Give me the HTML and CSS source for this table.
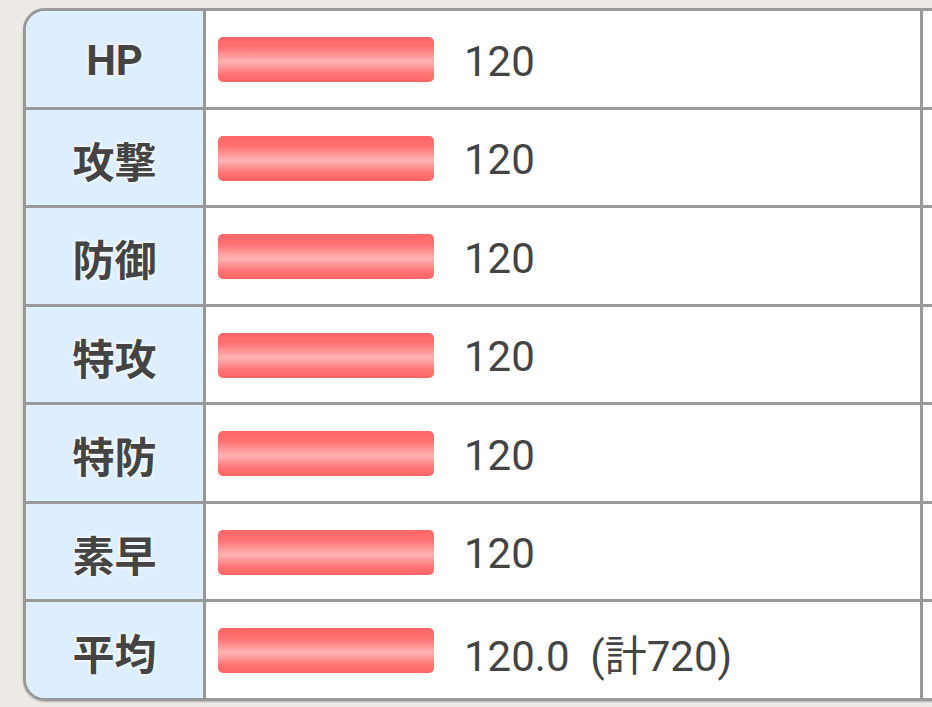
FILE: index.html
```html
<!DOCTYPE html>
<html lang="ja">
<head>
<meta charset="utf-8">
<link rel="stylesheet" href="styles.css">
</head>
<body>
<div class="stats">
  <div class="row"><div class="head">HP</div><div class="val"><span class="bar"></span><span class="num">120</span></div><div class="extra"></div></div>
  <div class="row"><div class="head">攻撃</div><div class="val"><span class="bar"></span><span class="num">120</span></div><div class="extra"></div></div>
  <div class="row"><div class="head">防御</div><div class="val"><span class="bar"></span><span class="num">120</span></div><div class="extra"></div></div>
  <div class="row"><div class="head">特攻</div><div class="val"><span class="bar"></span><span class="num">120</span></div><div class="extra"></div></div>
  <div class="row"><div class="head">特防</div><div class="val"><span class="bar"></span><span class="num">120</span></div><div class="extra"></div></div>
  <div class="row"><div class="head">素早</div><div class="val"><span class="bar"></span><span class="num">120</span></div><div class="extra"></div></div>
  <div class="row last"><div class="head">平均</div><div class="val"><span class="bar"></span><span class="num">120.0&nbsp;&nbsp;(計720)</span></div><div class="extra"></div></div>
</div>
</body>
</html>
```
FILE: styles.css
```css
html, body {
  margin: 0;
  padding: 0;
  background: #eeeae6;
  overflow: hidden;
  width: 932px;
  height: 707px;
}
body {
  font-family: Roboto, "Noto Sans CJK JP", sans-serif;
  color: #444;
}
.stats {
  margin: 8px 0 0 23px;
  width: 1000px;
  border: 3px solid #999;
  border-radius: 22px 0 0 22px;
  overflow: hidden;
  background: #fff;
  box-shadow: 0 1px 2px rgba(0,0,0,0.25);
}
.row {
  display: flex;
  height: 95.5px;
  border-bottom: 3px solid #999;
}
.row.last {
  border-bottom: none;
}
.head {
  width: 180px;
  flex: none;
  background: #ddeeff;
  border-right: 3px solid #999;
  display: flex;
  align-items: center;
  justify-content: center;
  font-weight: bold;
  font-size: 42px;
  color: #444;
  text-shadow: 0 0 3px #fff, 0 0 4px #fff;
  padding-top: 4px;
  box-sizing: border-box;
}
.val {
  width: 702px;
  flex: none;
  border-right: 3px solid #999;
  display: flex;
  align-items: center;
  padding-left: 12px;
  box-sizing: content-box;
}
.bar {
  width: 216px;
  height: 45px;
  margin-top: 2px;
  border-radius: 5px;
  background: linear-gradient(#ff6666 0%, #ff7070 22%, #ffb3b3 55%, #ff7474 82%, #ff6464 100%);
  flex: none;
}
.num {
  margin-left: 30px;
  font-size: 42px;
  padding-top: 5px;
  color: #444;
}
.extra {
  flex: 1;
}
```
